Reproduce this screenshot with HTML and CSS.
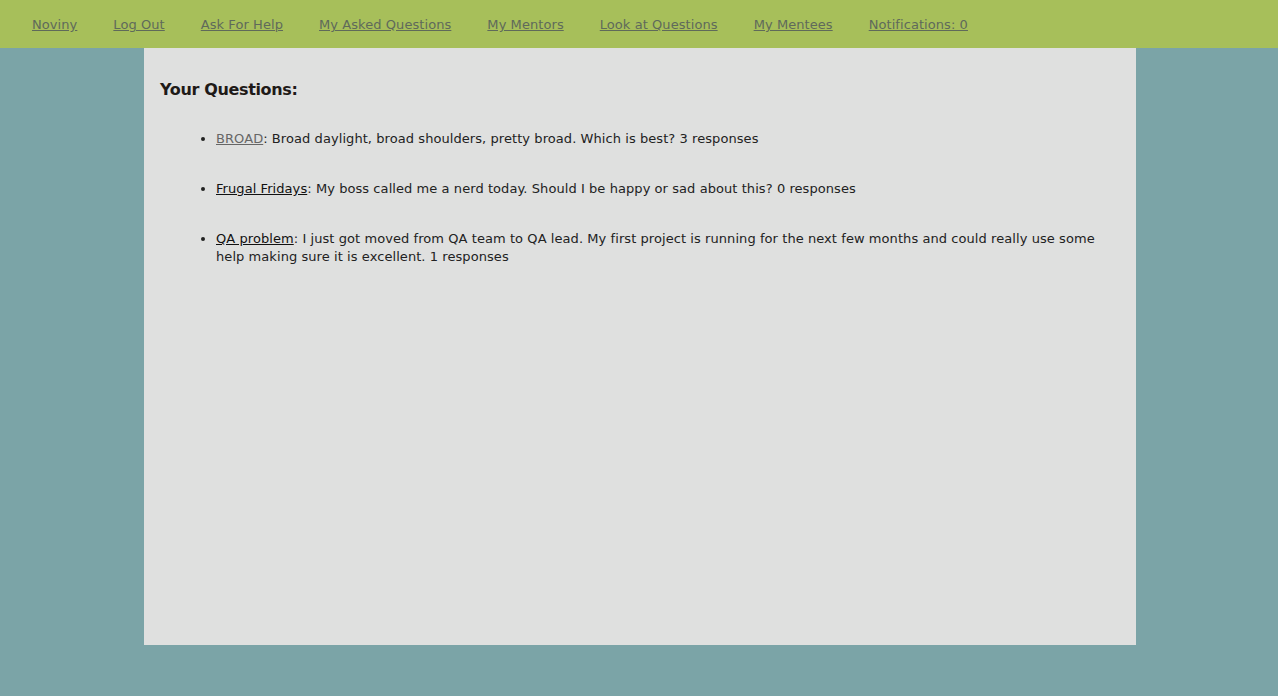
FILE: index.html
```html
<!DOCTYPE html>
<html>
<head>
<meta charset="utf-8">
<title>Your Questions</title>
<link rel="stylesheet" href="styles.css">
</head>
<body>
<nav class="topnav">
  <a href="#">Noviny</a>
  <a href="#">Log Out</a>
  <a href="#">Ask For Help</a>
  <a href="#">My Asked Questions</a>
  <a href="#">My Mentors</a>
  <a href="#">Look at Questions</a>
  <a href="#">My Mentees</a>
  <a href="#">Notifications: 0</a>
</nav>
<main class="panel">
  <h2 class="title">Your Questions:</h2>
  <ul class="questions">
    <li><a class="q-link visited" href="#">BROAD</a>: Broad daylight, broad shoulders, pretty broad. Which is best? 3 responses</li>
    <li><a class="q-link" href="#">Frugal Fridays</a>: My boss called me a nerd today. Should I be happy or sad about this? 0 responses</li>
    <li><a class="q-link" href="#">QA problem</a>: I just got moved from QA team to QA lead. My first project is running for the next few months and could really use some help making sure it is excellent. 1 responses</li>
  </ul>
</main>
</body>
</html>
```
FILE: styles.css
```css
html, body {
  margin: 0;
  padding: 0;
}
body {
  background: #7ba4a7;
  font-family: Verdana, "DejaVu Sans", sans-serif;
  font-size: 13px;
  letter-spacing: 0.07px;
  color: #222;
}
.topnav {
  background: #a7bf5a;
  height: 48px;
  box-sizing: border-box;
  padding-top: 2px;
  display: flex;
  align-items: center;
  padding-left: 32px;
  gap: 36px;
}
.topnav a {
  color: #5f6a5a;
  text-decoration: underline;
  font-size: 13px;
  line-height: 18px;
}
.panel {
  background: #dfe0df;
  width: 992px;
  height: 597px;
  margin: 0 0 0 144px;
  padding: 32px 16px 0;
  box-sizing: border-box;
}
.title {
  margin: 0;
  font-size: 16px;
  line-height: 19px;
  font-weight: bold;
  letter-spacing: -0.35px;
  color: #1e1a18;
}
.questions {
  margin: 31px 0 0;
  padding-left: 56px;
  padding-right: 0;
}
.questions li {
  line-height: 18px;
  margin-bottom: 32px;
}
.q-link {
  color: #111;
}
.q-link.visited {
  color: #666;
}
```
